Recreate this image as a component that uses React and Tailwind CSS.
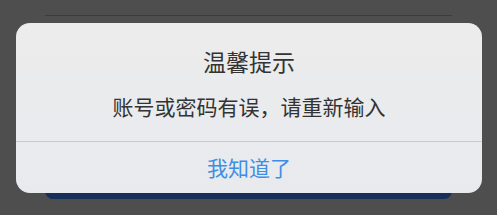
export default function App() {
  return (
    <div
      className="relative w-[497px] h-[215px] overflow-hidden bg-[#4e4e4e]"
      style={{ fontFamily: '"Noto Sans CJK SC", "Noto Sans", sans-serif' }}
    >
      {/* page behind the mask */}
      <div className="mx-[45px] pt-[15px] flex flex-col">
        <div className="h-px bg-[#3c3c3c]" />
        <div className="mt-[134px] h-[49px] rounded-b-[8px] bg-[#16305a]" />
      </div>

      {/* dialog */}
      <div className="absolute left-[16px] top-[23px] w-[466px] h-[170px] flex flex-col rounded-[14px] bg-gradient-to-b from-[#ececec] to-[#e8eaee] overflow-hidden">
        <div className="h-[118px] flex flex-col items-center">
          <div className="mt-[24px] text-[23px] leading-[28px] text-[#333]">
            温馨提示
          </div>
          <div className="mt-[17px] text-[21px] leading-[28px] text-[#333]">
            账号或密码有误，请重新输入
          </div>
        </div>
        <div className="h-px bg-[#c9c9c9]" />
        <button className="flex-1 flex items-center justify-center text-[21px] text-[#3d8ee5]">
          我知道了
        </button>
      </div>
    </div>
  );
}
